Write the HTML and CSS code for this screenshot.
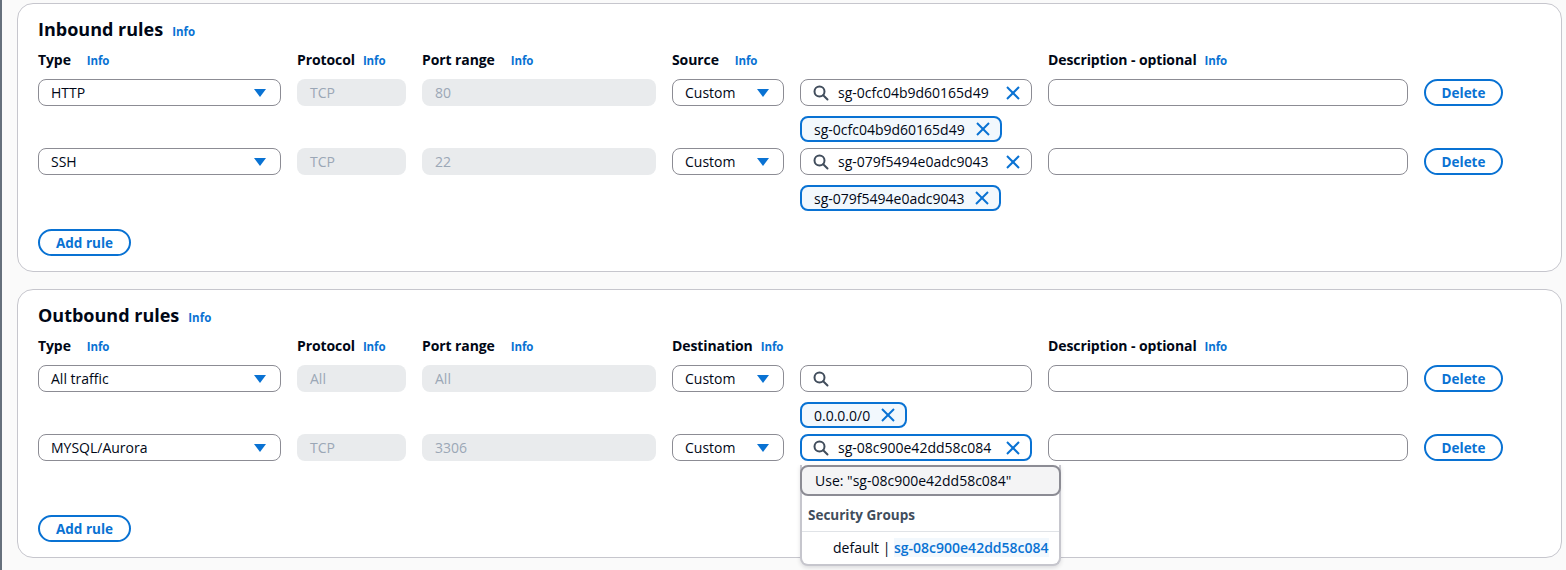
FILE: index.html
```html
<!DOCTYPE html>
<html lang="en">
<head>
<meta charset="utf-8">
<title>Security group rules</title>
<link rel="stylesheet" href="styles.css">
</head>
<body>
<div class="page">
  <section class="card">
    <div class="card-head"><h2>Inbound rules</h2><a class="info">Info</a></div>
    <div class="grid labels">
      <div class="label">Type<a class="info wide">Info</a></div>
      <div class="label">Protocol<a class="info">Info</a></div>
      <div class="label">Port range<a class="info wide">Info</a></div>
      <div class="label">Source<a class="info wide">Info</a></div>
      <div></div>
      <div class="label">Description - optional<a class="info">Info</a></div>
      <div></div>
    </div>
    <div class="rule">
      <div class="grid">
        <div class="select"><span>HTTP</span><svg class="caret" viewBox="0 0 12 8"><polygon points="0,0 12,0 6,8"/></svg></div>
        <div class="disabled">TCP</div>
        <div class="disabled">80</div>
        <div class="select"><span>Custom</span><svg class="caret" viewBox="0 0 12 8"><polygon points="0,0 12,0 6,8"/></svg></div>
        <div class="search">
          <svg class="mag" viewBox="0 0 16 16"><circle cx="6.5" cy="6.5" r="5"/><line x1="10.2" y1="10.2" x2="14.5" y2="14.5"/></svg>
          <span class="search-text">sg-0cfc04b9d60165d49</span>
          <svg class="x" viewBox="0 0 14 14"><line x1="1" y1="1" x2="13" y2="13"/><line x1="13" y1="1" x2="1" y2="13"/></svg>
        </div>
        <div class="text-input"></div>
        <button class="btn del">Delete</button>
      </div>
      <div class="grid token-row">
        <div class="token col-search"><span>sg-0cfc04b9d60165d49</span><svg class="x" viewBox="0 0 14 14"><line x1="1" y1="1" x2="13" y2="13"/><line x1="13" y1="1" x2="1" y2="13"/></svg></div>
      </div>
    </div>
    <div class="rule">
      <div class="grid">
        <div class="select"><span>SSH</span><svg class="caret" viewBox="0 0 12 8"><polygon points="0,0 12,0 6,8"/></svg></div>
        <div class="disabled">TCP</div>
        <div class="disabled">22</div>
        <div class="select"><span>Custom</span><svg class="caret" viewBox="0 0 12 8"><polygon points="0,0 12,0 6,8"/></svg></div>
        <div class="search">
          <svg class="mag" viewBox="0 0 16 16"><circle cx="6.5" cy="6.5" r="5"/><line x1="10.2" y1="10.2" x2="14.5" y2="14.5"/></svg>
          <span class="search-text">sg-079f5494e0adc9043</span>
          <svg class="x" viewBox="0 0 14 14"><line x1="1" y1="1" x2="13" y2="13"/><line x1="13" y1="1" x2="1" y2="13"/></svg>
        </div>
        <div class="text-input"></div>
        <button class="btn del">Delete</button>
      </div>
      <div class="grid token-row">
        <div class="token col-search"><span>sg-079f5494e0adc9043</span><svg class="x" viewBox="0 0 14 14"><line x1="1" y1="1" x2="13" y2="13"/><line x1="13" y1="1" x2="1" y2="13"/></svg></div>
      </div>
    </div>
    <button class="btn add">Add rule</button>
  </section>

  <section class="card">
    <div class="card-head"><h2>Outbound rules</h2><a class="info">Info</a></div>
    <div class="grid labels">
      <div class="label">Type<a class="info wide">Info</a></div>
      <div class="label">Protocol<a class="info">Info</a></div>
      <div class="label">Port range<a class="info wide">Info</a></div>
      <div class="label">Destination<a class="info">Info</a></div>
      <div></div>
      <div class="label">Description - optional<a class="info">Info</a></div>
      <div></div>
    </div>
    <div class="rule">
      <div class="grid">
        <div class="select"><span>All traffic</span><svg class="caret" viewBox="0 0 12 8"><polygon points="0,0 12,0 6,8"/></svg></div>
        <div class="disabled">All</div>
        <div class="disabled">All</div>
        <div class="select"><span>Custom</span><svg class="caret" viewBox="0 0 12 8"><polygon points="0,0 12,0 6,8"/></svg></div>
        <div class="search">
          <svg class="mag" viewBox="0 0 16 16"><circle cx="6.5" cy="6.5" r="5"/><line x1="10.2" y1="10.2" x2="14.5" y2="14.5"/></svg>
          <span class="search-text"></span>
        </div>
        <div class="text-input"></div>
        <button class="btn del">Delete</button>
      </div>
      <div class="grid token-row">
        <div class="token col-search"><span>0.0.0.0/0</span><svg class="x" viewBox="0 0 14 14"><line x1="1" y1="1" x2="13" y2="13"/><line x1="13" y1="1" x2="1" y2="13"/></svg></div>
      </div>
    </div>
    <div class="rule">
      <div class="grid">
        <div class="select"><span>MYSQL/Aurora</span><svg class="caret" viewBox="0 0 12 8"><polygon points="0,0 12,0 6,8"/></svg></div>
        <div class="disabled">TCP</div>
        <div class="disabled">3306</div>
        <div class="select"><span>Custom</span><svg class="caret" viewBox="0 0 12 8"><polygon points="0,0 12,0 6,8"/></svg></div>
        <div class="search focused">
          <svg class="mag" viewBox="0 0 16 16"><circle cx="6.5" cy="6.5" r="5"/><line x1="10.2" y1="10.2" x2="14.5" y2="14.5"/></svg>
          <span class="search-text">sg-08c900e42dd58c084</span>
          <svg class="x" viewBox="0 0 14 14"><line x1="1" y1="1" x2="13" y2="13"/><line x1="13" y1="1" x2="1" y2="13"/></svg>
          <div class="dropdown">
            <div class="opt-use">Use: "sg-08c900e42dd58c084"</div>
            <div class="group-head">Security Groups</div>
            <div class="opt">default | <mark>sg-08c900e42dd58c084</mark></div>
          </div>
        </div>
        <div class="text-input"></div>
        <button class="btn del">Delete</button>
      </div>
      <div class="grid token-row"></div>
    </div>
    <button class="btn add">Add rule</button>
  </section>
</div>
</body>
</html>
```
FILE: styles.css
```css
* { box-sizing: border-box; }
html, body { margin: 0; padding: 0; }
body {
  font-family: "Open Sans", "Noto Sans", sans-serif;
  color: #000716;
  background: #fafafa;
  border-left: 2px solid #66707c;
  min-height: 570px;
}
.page {
  padding: 3px 4px 0 15px;
  display: flex;
  flex-direction: column;
  gap: 17px;
}
.card {
  background: #fff;
  border: 1px solid #c6c6cd;
  border-radius: 16px;
  padding: 13px 20px 15px;
}
.card-head {
  display: flex;
  align-items: baseline;
  gap: 9px;
  height: 24px;
  margin-bottom: 9px;
}
.card-head h2 {
  margin: 0;
  font-size: 18px;
  line-height: 24px;
  font-weight: 700;
}
.info {
  color: #0972d3;
  font-size: 11.5px;
  font-weight: 700;
  margin-left: 8px;
}
.card-head .info { margin-left: 0; }
.info.wide { margin-left: 16px; }
.grid {
  display: grid;
  grid-template-columns: 243px 109px 234px 112px 232px 360px 79px;
  column-gap: 16px;
}
.labels { height: 20px; margin-bottom: 9px; }
.label {
  font-size: 14px;
  font-weight: 700;
  line-height: 20px;
  white-space: nowrap;
  letter-spacing: -0.1px;
}
.rule { margin-bottom: 6px; }
.rule .grid:first-child { height: 27px; }
.token-row { margin-top: 10px; height: 26px; }
.col-search { grid-column: 5; }
.select, .disabled, .search, .text-input {
  height: 27px;
  border-radius: 8px;
  font-size: 14px;
  display: flex;
  align-items: center;
}
.select {
  border: 1px solid #8c8c94;
  padding: 0 14px 0 12px;
  justify-content: space-between;
}
.caret { width: 12px; height: 8px; fill: #0972d3; }
.disabled {
  background: #e9ebed;
  color: #9ba7b6;
  padding: 0 13px;
}
.text-input { border: 1px solid #8c8c94; }
.search {
  position: relative;
  border: 1px solid #8c8c94;
  padding: 0 11px 0 12px;
}
.search.focused {
  border: 2px solid #0972d3;
  padding: 0 10px 0 11px;
}
.mag {
  width: 16px; height: 16px;
  fill: none; stroke: #414d5c; stroke-width: 2; stroke-linecap: round;
  flex: none;
}
.search-text { margin-left: 9px; flex: 1; white-space: nowrap; }
.x {
  width: 14px; height: 14px;
  stroke: #0972d3; stroke-width: 2; fill: none;
  flex: none;
}
.token {
  height: 26px;
  justify-self: start;
  display: flex;
  align-items: center;
  gap: 11px;
  border: 2px solid #0972d3;
  background: #f2f8fd;
  border-radius: 8px;
  padding: 0 10px 0 12px;
  font-size: 14px;
  white-space: nowrap;
}
.btn {
  font-family: inherit;
  height: 27px;
  border: 2px solid #0972d3;
  border-radius: 20px;
  background: #fff;
  color: #0972d3;
  font-size: 13.5px;
  font-weight: 700;
  padding: 0;
  cursor: pointer;
}
.del { width: 79px; }
.add { width: 93px; display: block; margin-top: 18px; }
.dropdown {
  position: absolute;
  left: -2px;
  top: 29px;
  width: 261px;
  height: 101px;
  background: #fff;
  border: 2px solid #c6c6cd;
  border-top: none;
  border-radius: 0 0 8px 8px;
  box-shadow: 0 2px 4px rgba(0, 7, 22, 0.12);
  z-index: 5;
}
.opt-use {
  height: 31px;
  margin: 0 -2px;
  border: 2px solid #8c8c94;
  border-radius: 8px;
  background: #f4f4f5;
  padding: 0 13px;
  display: flex;
  align-items: center;
  font-size: 14px;
  white-space: nowrap;
}
.group-head {
  height: 36px;
  padding: 3px 6px 0;
  display: flex;
  align-items: center;
  font-size: 13.5px;
  font-weight: 700;
  color: #414d5c;
  border-bottom: 1px solid #e0e3e7;
}
.opt {
  height: 31px;
  padding: 0 31px;
  display: flex;
  align-items: center;
  font-size: 14px;
  white-space: pre;
}
.opt mark {
  background: #f2f8fd;
  color: #0972d3;
  font-weight: 600;
}
```
